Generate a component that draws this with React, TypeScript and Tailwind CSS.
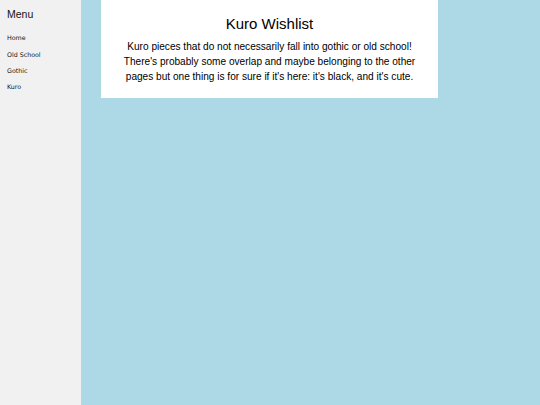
export default function App() {
  const links = ["Home", "Old School", "Gothic", "Kuro"];
  return (
    <div
      className="flex w-[540px] h-[405px] bg-[#add8e6] text-black overflow-hidden"
      style={{ fontFamily: '"Liberation Sans", Arial, sans-serif' }}
    >
      <aside className="w-[81px] shrink-0 h-full bg-[#f1f1f1] pl-[7px] pt-[8.4px]">
        <div className="text-[10.5px] leading-[12px] text-[#111]">Menu</div>
        <nav className="mt-[9.9px] flex flex-col font-['DejaVu_Sans',sans-serif] opacity-[0.99] antialiased">
          {links.map((l) => (
            <a key={l} className="block text-[6.3px] leading-[16.33px] h-[16.33px] text-[#111]">
              {l}
            </a>
          ))}
        </nav>
      </aside>
      <main className="flex-1">
        <section className="ml-[20px] w-[337px] bg-white pt-[15px] pb-[14px] text-center">
          <h1 className="text-[15px] leading-[17px] font-normal">Kuro Wishlist</h1>
          <p className="mt-[7px] text-[10.1px] leading-[15px] px-[20px]">
            Kuro pieces that do not necessarily fall into gothic or old school! There's probably some
            overlap and maybe belonging to the other pages but one thing is for sure if it's here:
            it's black, and it's cute.
          </p>
        </section>
      </main>
    </div>
  );
}
